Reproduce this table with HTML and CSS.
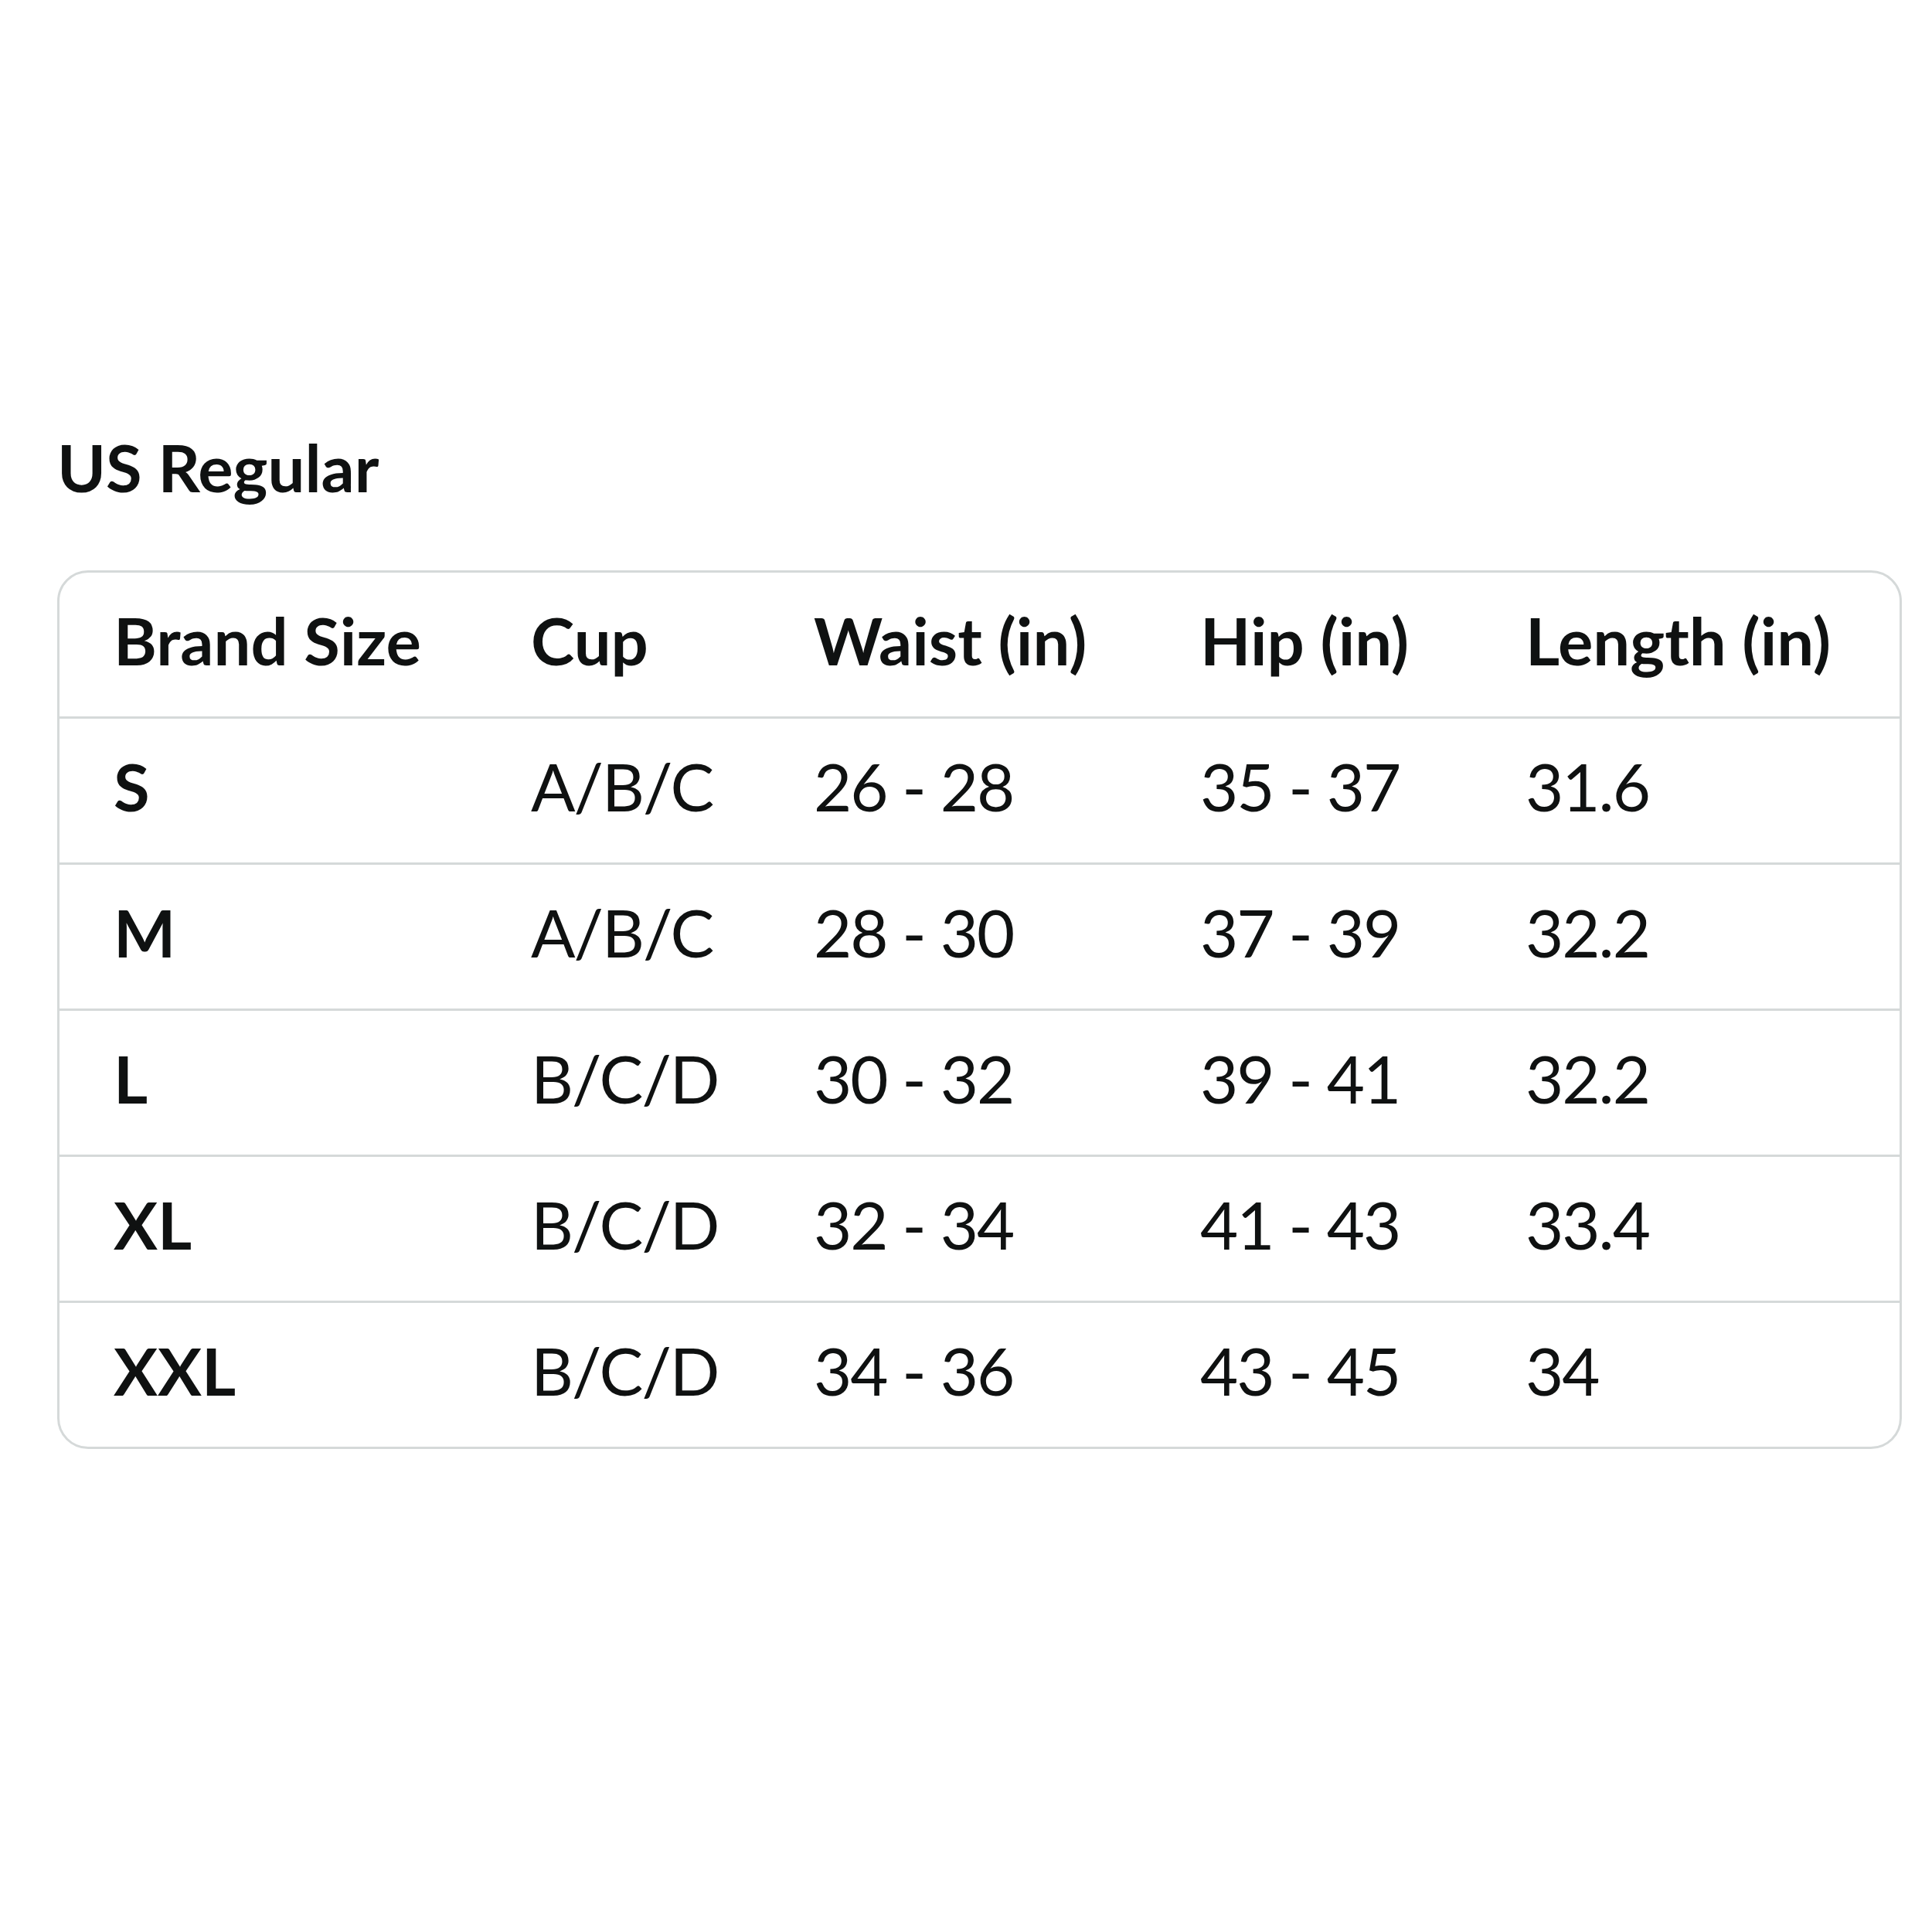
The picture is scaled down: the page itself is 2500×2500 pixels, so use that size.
FILE: index.html
```html
<!DOCTYPE html>
<html>
<head>
<meta charset="utf-8">
<link rel="stylesheet" href="styles.css">
</head>
<body>
<div class="page">
  <h2 class="title">US Regular</h2>
  <div class="chart">
    <div class="row head">
      <div class="cell">Brand Size</div>
      <div class="cell">Cup</div>
      <div class="cell">Waist (in)</div>
      <div class="cell">Hip (in)</div>
      <div class="cell">Length (in)</div>
    </div>
    <div class="row">
      <div class="cell size">S</div>
      <div class="cell">A/B/C</div>
      <div class="cell">26 - 28</div>
      <div class="cell">35 - 37</div>
      <div class="cell">31.6</div>
    </div>
    <div class="row">
      <div class="cell size">M</div>
      <div class="cell">A/B/C</div>
      <div class="cell">28 - 30</div>
      <div class="cell">37 - 39</div>
      <div class="cell">32.2</div>
    </div>
    <div class="row">
      <div class="cell size">L</div>
      <div class="cell">B/C/D</div>
      <div class="cell">30 - 32</div>
      <div class="cell">39 - 41</div>
      <div class="cell">32.2</div>
    </div>
    <div class="row">
      <div class="cell size">XL</div>
      <div class="cell">B/C/D</div>
      <div class="cell">32 - 34</div>
      <div class="cell">41 - 43</div>
      <div class="cell">33.4</div>
    </div>
    <div class="row">
      <div class="cell size">XXL</div>
      <div class="cell">B/C/D</div>
      <div class="cell">34 - 36</div>
      <div class="cell">43 - 45</div>
      <div class="cell">34</div>
    </div>
  </div>
</div>
</body>
</html>
```

FILE: styles.css
```css
html, body {
  margin: 0;
  padding: 0;
  background: #ffffff;
}

body {
  font-family: Lato, "Liberation Sans", sans-serif;
  color: #0f1111;
}

.page {
  width: 2387px;
  padding: 553px 0 0 74px;
}

.title {
  margin: 0 0 83px 0;
  font-size: 85px;
  line-height: 1.2;
  font-weight: 700;
}

.chart {
  border: 3px solid #d5d9d9;
  border-radius: 40px;
  overflow: hidden;
}

.row {
  display: grid;
  grid-template-columns: 540px 366px 500px 421px 1fr;
  align-items: center;
  height: 174px;
  padding: 0 0 12px 70px;
  border-bottom: 3px solid #d5d9d9;
  font-size: 85px;
}

.row:last-child {
  border-bottom: none;
}

.cell {
  white-space: nowrap;
  line-height: 1.2;
  letter-spacing: -2px;
}

.head .cell,
.cell.size {
  font-weight: 700;
  letter-spacing: 0;
}
```
